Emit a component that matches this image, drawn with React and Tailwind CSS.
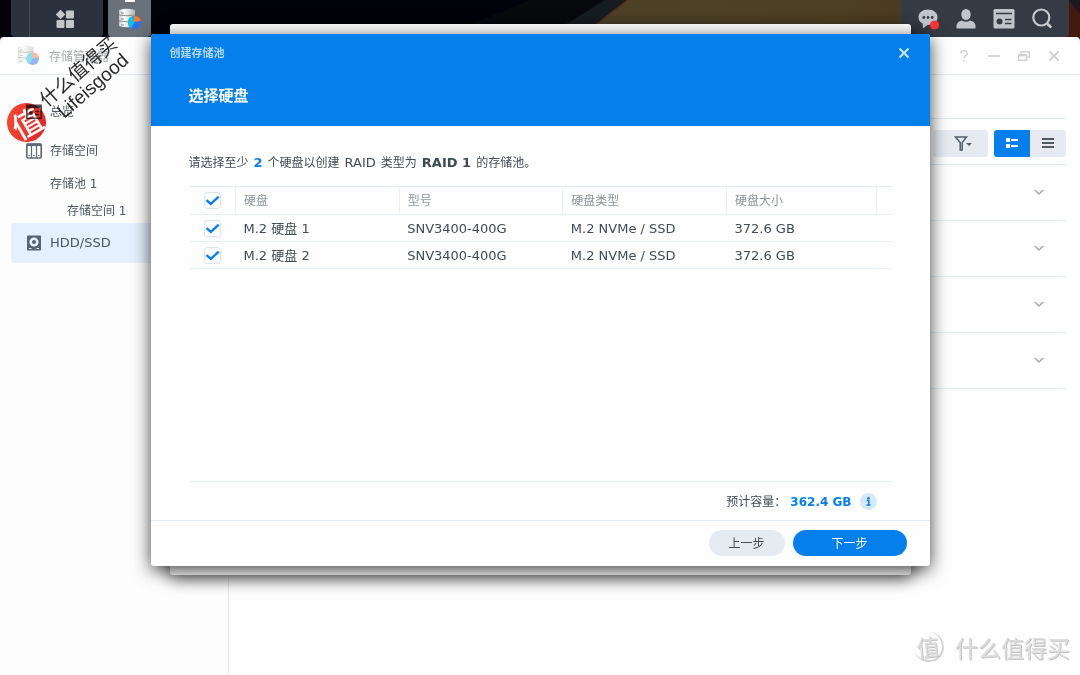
import { useState } from 'react';

const disks = [
  { name: 'M.2 硬盘 1', model: 'SNV3400-400G', type: 'M.2 NVMe / SSD', size: '372.6 GB' },
  { name: 'M.2 硬盘 2', model: 'SNV3400-400G', type: 'M.2 NVMe / SSD', size: '372.6 GB' }
];

function StorageIcon({ className }) {
  return (
    <svg viewBox="0 0 22 22" className={className} aria-hidden="true">
      <defs>
        <linearGradient id="disk" x1="0" x2="1">
          <stop offset="0" stopColor="#c9c9c9" />
          <stop offset="0.3" stopColor="#ffffff" />
          <stop offset="1" stopColor="#b4b4b4" />
        </linearGradient>
      </defs>
      <path d="M0 2Q8 -0.5 16 2V18Q8 20.500 0 18Z" fill="url(#disk)" />
      <path d="M0 7Q8 8.500 16 7M0 13Q8 14.500 16 13" stroke="#8b8b8b" strokeWidth="1" fill="none" />
      <path d="M2 5h3M2 11h3M2 17h3" stroke="#888" strokeWidth="1" />
      <circle cx="15.5" cy="14.5" r="6.5" fill="#2f6fee" />
      <path d="M15.5 14.5L12 20A6.5 6.5 0 0 1 14.5 8.1Z" fill="#12c3e8" />
      <path d="M15 14V8A6.5 6.5 0 0 1 21.8 13Z" fill="#ff7a2f" />
    </svg>
  );
}

function Wallpaper() {
  return (
    <svg viewBox="0 0 1080 37" preserveAspectRatio="none" className="absolute inset-0 h-full w-full" aria-hidden="true">
      <defs>
        <linearGradient id="planet" x1="0" x2="1">
          <stop offset="0" stopColor="#4c4128" />
          <stop offset="0.5" stopColor="#4d4024" />
          <stop offset="1" stopColor="#452f1d" />
        </linearGradient>
      </defs>
      <rect width="1080" height="37" fill="#02030a" />
      <path d="M440 37L530 0H628L580 37Z" fill="#07090d" />
      <path d="M605 0H628L580 37H545Z" fill="#171c20" />
      <path d="M628 0H1080V37H580Z" fill="url(#planet)" />
      <path d="M628 0L580 37" stroke="#5d2f1a" strokeWidth="1.5" />
      <path d="M1060 0H1080V37H1060Z" fill="#421b0d" />
      <path d="M1068 0H1080V14Z" fill="#1c1a20" />
    </svg>
  );
}

function TopBar() {
  return (
    <header className="relative flex h-[37px] shrink-0 justify-between pr-[11px] pl-[11px]">
      <Wallpaper />
      <div className="relative flex gap-[5px]">
        <div className="flex rounded-b-sm bg-[#2b323d]">
          <div className="w-[19px] border-r border-[#444b56]" />
          <button aria-label="主菜单" className="flex w-[73px] items-center justify-center pr-1">
            <svg viewBox="0 0 18 18" className="h-[18px] w-[18px]" fill="#c3c7cc">
              <path d="M4.500 -0.300L9.300 4.500L4.500 9.300L-0.300 4.500Z" />
              <rect x="10" y="0.5" width="8" height="8" rx="1" />
              <rect x="0.5" y="10" width="8" height="8" rx="1" />
              <rect x="10" y="10" width="8" height="8" rx="1" />
            </svg>
          </button>
        </div>
        <button aria-label="存储管理器" className="relative flex w-[43px] items-center justify-center rounded-b-sm bg-[#69717b]">
          <span className="absolute top-0 h-[2px] w-[10px] bg-white" />
          <StorageIcon className="h-[22px] w-[22px]" />
        </button>
      </div>
      <div className="relative flex items-center gap-[16px] rounded-b-sm bg-[#343b45] px-[16px]">
        <button aria-label="通知" className="h-[22px] w-[22px]">
          <svg viewBox="0 0 22 22" fill="#bfc6cf">
            <path d="M11 1.5C5.500 1.500 1.500 4.600 1.500 9.300C1.500 12.300 3.200 14.500 5.800 15.800V20.500L10.500 17C16.500 17 20.500 14 20.500 9.300C20.500 4.600 16.500 1.500 11 1.500Z" />
            <circle cx="6.800" cy="9.500" r="1.400" fill="#343b45" />
            <circle cx="11" cy="9.500" r="1.400" fill="#343b45" />
            <circle cx="15.200" cy="9.500" r="1.400" fill="#343b45" />
            <circle cx="17.500" cy="17" r="4.600" fill="#ff3433" />
          </svg>
        </button>
        <button aria-label="用户" className="h-[22px] w-[22px]">
          <svg viewBox="0 0 22 22" fill="#c0c5cc">
            <ellipse cx="11" cy="6.500" rx="4.700" ry="5.500" />
            <path d="M1.500 20.500V17.500Q2 13.500 7 12.500Q11 15 15 12.500Q20 13.500 20.500 17.500V20.500Z" />
          </svg>
        </button>
        <button aria-label="小组件" className="h-[22px] w-[22px]">
          <svg viewBox="0 0 22 22" fill="none">
            <rect x="0.500" y="1" width="21" height="19.500" rx="1.500" fill="#c0c5cc" />
            <path d="M3 5.500H19" stroke="#343b45" strokeWidth="1.500" />
            <circle cx="6.500" cy="13.500" r="3" fill="#343b45" />
            <path d="M12 11.500H18.500M12 15.500H18.500" stroke="#343b45" strokeWidth="1.700" />
          </svg>
        </button>
        <button aria-label="搜索" className="h-[22px] w-[22px]">
          <svg viewBox="0 0 22 22" fill="none" stroke="#c6c9cd" strokeWidth="2.200">
            <circle cx="10.300" cy="9.500" r="8" />
            <path d="M16 15.500L20.300 19.500" strokeWidth="2.800" />
          </svg>
        </button>
      </div>
    </header>
  );
}

function TitleBar() {
  return (
    <div className="flex h-[38px] shrink-0 items-center border-b border-[#e3e9f1] pr-[20px] pl-[18px]">
      <StorageIcon className="h-[21px] w-[21px] opacity-50" />
      <h1 className="ml-[10px] flex-1 pt-[2px] text-[12px] text-[#a7abb0]">存储管理器</h1>
      <div className="flex gap-[18px] pt-px text-[#cfd1d4]">
        <button aria-label="帮助" className="h-3 w-3">
          <svg viewBox="0 0 12 12" fill="none" stroke="currentColor" strokeWidth="1.500">
            <path d="M2.800 3.500C2.800 -0.300 9.200 -0.300 9.200 3.300C9.200 5.500 6 5.500 6 8.300" />
            <path d="M6 10V11.700" />
          </svg>
        </button>
        <button aria-label="最小化" className="h-3 w-3">
          <svg viewBox="0 0 12 12" stroke="currentColor" strokeWidth="1.800">
            <path d="M0 6H12" />
          </svg>
        </button>
        <button aria-label="还原" className="h-3 w-3">
          <svg viewBox="0 0 12 12" fill="none" stroke="currentColor" strokeWidth="1.500">
            <path d="M3 3.500V1.700H11.400V7H9.500" />
            <rect x="0.600" y="4.800" width="8" height="5.500" />
            <path d="M0.600 5.400H8.600" strokeWidth="2" />
          </svg>
        </button>
        <button aria-label="关闭" className="h-3 w-3">
          <svg viewBox="0 0 12 12" stroke="currentColor" strokeWidth="2">
            <path d="M1.500 1.500L10.500 10.500M10.500 1.500L1.500 10.500" />
          </svg>
        </button>
      </div>
    </div>
  );
}

function Sidebar() {
  return (
    <nav className="w-[229px] shrink-0 border-r border-[#dfe6ef] bg-[#fdfdfe] px-[11px] pt-[17px] text-[12px] text-[#4c5660]">
      <a href="#overview" className="flex h-[40px] items-center gap-2 pl-[15px]">
        <svg viewBox="0 0 16 16" className="h-4 w-4" fill="none" stroke="#49525d" strokeWidth="1.600">
          <rect x="0.800" y="1.300" width="14.400" height="13" />
          <path d="M1 3H15" strokeWidth="2.500" />
          <circle cx="5" cy="9" r="2" fill="#49525d" stroke="none" />
          <path d="M9 7.500H13M9 10.500H13" />
        </svg>
        总览
      </a>
      <a href="#storage" className="flex h-[38px] items-center gap-2 pl-[15px]">
        <svg viewBox="0 0 16 16" className="h-4 w-4" fill="none" stroke="#5f6872" strokeWidth="1.600">
          <rect x="0.800" y="1" width="14.400" height="14" rx="1" />
          <path d="M5.500 1V15M10.500 1V15" strokeWidth="1.200" />
          <path d="M0.800 1.800H15.200" strokeWidth="2.500" />
          <path d="M2.500 12.500H4M7.200 12.500H8.800M12 12.500H13.500" strokeWidth="1" />
        </svg>
        存储空间
      </a>
      <a href="#pool-1" className="flex h-[27px] items-center pt-px pl-[39px]">存储池 1</a>
      <a href="#volume-1" className="flex h-[26px] items-center pt-px pl-[56px]">存储空间 1</a>
      <a href="#hdd" className="flex h-[40px] items-center gap-2 rounded bg-[#e4f0fd] pl-[15px] text-[13px]">
        <svg viewBox="0 0 16 16" className="h-4 w-4" aria-hidden="true">
          <rect x="1" y="0.500" width="14" height="15" rx="1" fill="#566370" />
          <circle cx="8" cy="7" r="4.600" fill="#e4f0fd" />
          <circle cx="8" cy="7" r="2" fill="#566370" />
          <path d="M3 13.500H5.500M10.500 13.500H13" stroke="#e4f0fd" strokeWidth="1" />
        </svg>
        HDD/SSD
      </a>
    </nav>
  );
}

function MainPanel() {
  return (
    <main className="min-w-0 flex-1 pr-[14px] pl-[14px]">
      <div className="h-[44px] border-b border-[#dde8f2]" />
      <div className="flex h-[46px] items-center justify-end gap-[6px] border-b border-[#dde8f2] pt-[3px]">
        <button aria-label="筛选" className="flex h-[27px] w-[55px] items-center justify-center rounded-[3px] bg-[#e7ebf1] pl-1">
          <svg viewBox="0 0 18 16" className="h-4 w-[18px]" fill="none" stroke="#555f6b" strokeWidth="1.800">
            <path d="M1.500 2H12.500L8.200 7.500V15H6.200V7.500Z" strokeWidth="1.500" />
            <path d="M12 8H18L15 11Z" fill="#555f6b" stroke="none" />
          </svg>
        </button>
        <div className="flex">
          <button aria-label="详细视图" className="flex h-[27px] w-[36px] items-center justify-center rounded-l-[3px] bg-[#057feb]">
            <svg viewBox="0 0 12 12" className="h-3 w-3" fill="#fff">
              <rect y="1" width="4" height="4" />
              <rect y="7" width="4" height="4" />
              <rect x="5" y="2" width="7" height="2" />
              <rect x="5" y="8" width="7" height="2" />
            </svg>
          </button>
          <button aria-label="列表视图" className="flex h-[27px] w-[36px] items-center justify-center rounded-r-[3px] bg-[#e7ebf1]">
            <svg viewBox="0 0 12 12" className="h-3 w-3" stroke="#505a65" strokeWidth="1.900">
              <path d="M0 2H12M0 6H12M0 10H12" />
            </svg>
          </button>
        </div>
      </div>
      {[1, 2, 3, 4].map((n) => (
        <button key={n} aria-label={`M.2 硬盘 ${n}`} className="flex h-14 w-full items-center justify-end border-b border-[#e3edf5] pr-[22px] pb-[2px]">
          <svg viewBox="0 0 10 10" className="h-[10px] w-[10px]" fill="none" stroke="#a3a8ad" strokeWidth="1.500">
            <path d="M0.800 3L5 7L9.200 3" />
          </svg>
        </button>
      ))}
    </main>
  );
}

function Check({ label, checked, onChange }) {
  return (
    <label className="relative ml-[15px] block h-[17px] w-[17px]">
      <input
        type="checkbox"
        aria-label={label}
        checked={checked}
        onChange={onChange}
        className="block h-[17px] w-[17px] appearance-none rounded-[3px] border border-[#dae5ee] bg-white"
      />
      {checked && (
        <svg viewBox="0 0 17 17" className="pointer-events-none absolute inset-0" fill="none" stroke="#0a80ee" strokeWidth="2.400">
          <path d="M2.500 8.200L6.800 12L14.700 4.600" />
        </svg>
      )}
    </label>
  );
}

function DiskTable() {
  const [selected, setSelected] = useState([true, true]);
  const all = selected.every(Boolean);

  return (
    <table className="w-full table-fixed border-collapse border-y border-[#e1eaf1] text-left">
      <colgroup>
        <col className="w-[47px]" />
        <col />
        <col />
        <col />
        <col className="w-[150px]" />
        <col className="w-[15px]" />
      </colgroup>
      <thead>
        <tr className="h-[28px] border-b border-[#e8eff5] text-[12px] text-[#8d949b]">
          <th className="p-0">
            <Check label="全选" checked={all} onChange={() => setSelected([!all, !all])} />
          </th>
          <th className="border-l border-[#e8eff5] pt-px pb-0 pl-2 font-normal">硬盘</th>
          <th className="border-l border-[#e8eff5] pt-px pb-0 pl-2 font-normal">型号</th>
          <th className="border-l border-[#e8eff5] pt-px pb-0 pl-2 font-normal">硬盘类型</th>
          <th className="border-l border-[#e8eff5] pt-px pb-0 pl-2 font-normal">硬盘大小</th>
          <th className="border-l border-[#e8eff5] p-0" />
        </tr>
      </thead>
      <tbody>
        {disks.map((disk, index) => (
          <tr key={disk.name} className="h-[27px] border-b border-[#e8eff5] text-[13px] leading-[18px]">
            <td className="p-0">
              <Check
                label={disk.name}
                checked={selected[index]}
                onChange={() => setSelected(selected.map((s, i) => (i === index ? !s : s)))}
              />
            </td>
            <td className="pt-px pb-0 pl-2">{disk.name}</td>
            <td className="pt-px pb-0 pl-2">{disk.model}</td>
            <td className="pt-px pb-0 pl-2">{disk.type}</td>
            <td className="pt-px pb-0 pl-2">{disk.size}</td>
            <td className="p-0" />
          </tr>
        ))}
      </tbody>
    </table>
  );
}

function CreatePoolDialog() {
  return (
    <div className="absolute inset-0 flex items-start justify-center pt-[34px]">
      <div className="relative w-full max-w-[779px]">
        <div className="absolute inset-x-[19px] -top-[10px] -bottom-[9px] rounded-[3px] bg-white shadow-[0_4px_16px_rgba(0,0,0,0.6)]" />
        <section
          role="dialog"
          aria-label="创建存储池"
          className="relative flex min-h-[532px] flex-col overflow-hidden rounded-[3px] bg-[#fefefe] text-[#414b55] shadow-[0_4px_18px_rgba(0,0,0,0.75)]"
        >
          <div className="h-[92px] bg-[#057feb] pr-[20px] pl-[19px]">
            <div className="flex h-[38px] items-center justify-between">
              <h2 className="pt-[2px] text-[11px] font-bold text-[#b4d9fb]">创建存储池</h2>
              <button aria-label="关闭" className="h-3 w-3">
                <svg viewBox="0 0 12 12" stroke="#cde6fc" strokeWidth="2">
                  <path d="M1.500 1.500L10.500 10.500M10.500 1.500L1.500 10.500" />
                </svg>
              </button>
            </div>
            <h3 className="pt-[13px] pl-[19px] text-[15px] leading-[22px] font-bold text-white">选择硬盘</h3>
          </div>
          <div className="flex flex-1 flex-col px-[38px]">
            <p className="flex items-baseline gap-[5px] pt-[27px] pb-[13px] text-[12px] leading-[20px]">
              <span>请选择至少</span>
              <b className="text-[13px] text-[#057feb]">2</b>
              <span>个硬盘以创建</span>
              <span className="text-[13px]">RAID</span>
              <span>类型为</span>
              <b className="text-[13px]">RAID 1</b>
              <span>的存储池。</span>
            </p>
            <DiskTable />
            <div className="mt-auto flex h-[39px] items-center justify-end border-t border-[#e4edf4] pr-[15px] text-[12px]">
              <span className="pt-[2px]">预计容量：</span>
              <b className="ml-[4px] pt-[2px] text-[#057feb]">362.4 GB</b>
              <button aria-label="信息" className="ml-2 h-[17px] w-[17px]">
                <svg viewBox="0 0 17 17">
                  <circle cx="8.500" cy="8.500" r="8.500" fill="#d5e9fc" />
                  <circle cx="8.500" cy="5.200" r="1.300" fill="#057feb" />
                  <path d="M6.700 7.600H8.800V12M6.500 12H10.500" stroke="#057feb" strokeWidth="1.500" fill="none" />
                </svg>
              </button>
            </div>
          </div>
          <div className="flex h-[46px] items-center justify-end gap-[8px] border-t border-[#e4edf4] pr-[23px] pb-px text-[12px]">
            <button className="h-[26px] w-[76px] rounded-full bg-[#e6ebf2] pt-px">上一步</button>
            <button className="h-[26px] w-[114px] rounded-full bg-[#057feb] pt-px text-white">下一步</button>
          </div>
        </section>
      </div>
    </div>
  );
}

function Watermarks() {
  return (
    <>
      <div className="pointer-events-none absolute top-[103px] left-[7px] flex h-[39px] w-[39px] -rotate-[30deg] items-center justify-center rounded-full bg-linear-to-br from-[#ff4a30] to-[#e21f2a] font-['Noto_Sans_CJK_SC',sans-serif] text-[30px] leading-[39px] font-medium text-white mix-blend-multiply">
        值
      </div>
      <div className="pointer-events-none absolute top-[58px] left-[37px] w-[100px] -rotate-[41deg] font-['Liberation_Sans','Noto_Sans_CJK_SC',sans-serif] text-[19px] leading-[20px] whitespace-nowrap text-[#2a2a2a]">
        <div>什么值得买</div>
        <div className="pl-[6px]">Lifeisgood</div>
      </div>
      <div className="pointer-events-none absolute right-[10px] bottom-[11px] flex items-center gap-[11px] font-['Noto_Sans_CJK_SC',sans-serif] text-[23px] leading-[34px] text-[#dedede] [text-shadow:1px_1px_0_#c4c4c4]">
        <span className="flex h-[30px] w-[30px] -rotate-6 items-center justify-center rounded-full border-r-2 border-b-2 border-[#d2d2d2]">
          值
        </span>
        什么值得买
      </div>
    </>
  );
}

export default function App() {
  return (
    <div className="relative flex min-h-screen flex-col overflow-hidden bg-[#02030a] font-['DejaVu_Sans','Noto_Sans_CJK_SC',sans-serif]">
      <TopBar />
      <div className="flex flex-1 flex-col rounded-t-[4px] bg-[#fefefe]">
        <TitleBar />
        <div className="flex flex-1">
          <Sidebar />
          <MainPanel />
        </div>
      </div>
      <CreatePoolDialog />
      <Watermarks />
    </div>
  );
}
